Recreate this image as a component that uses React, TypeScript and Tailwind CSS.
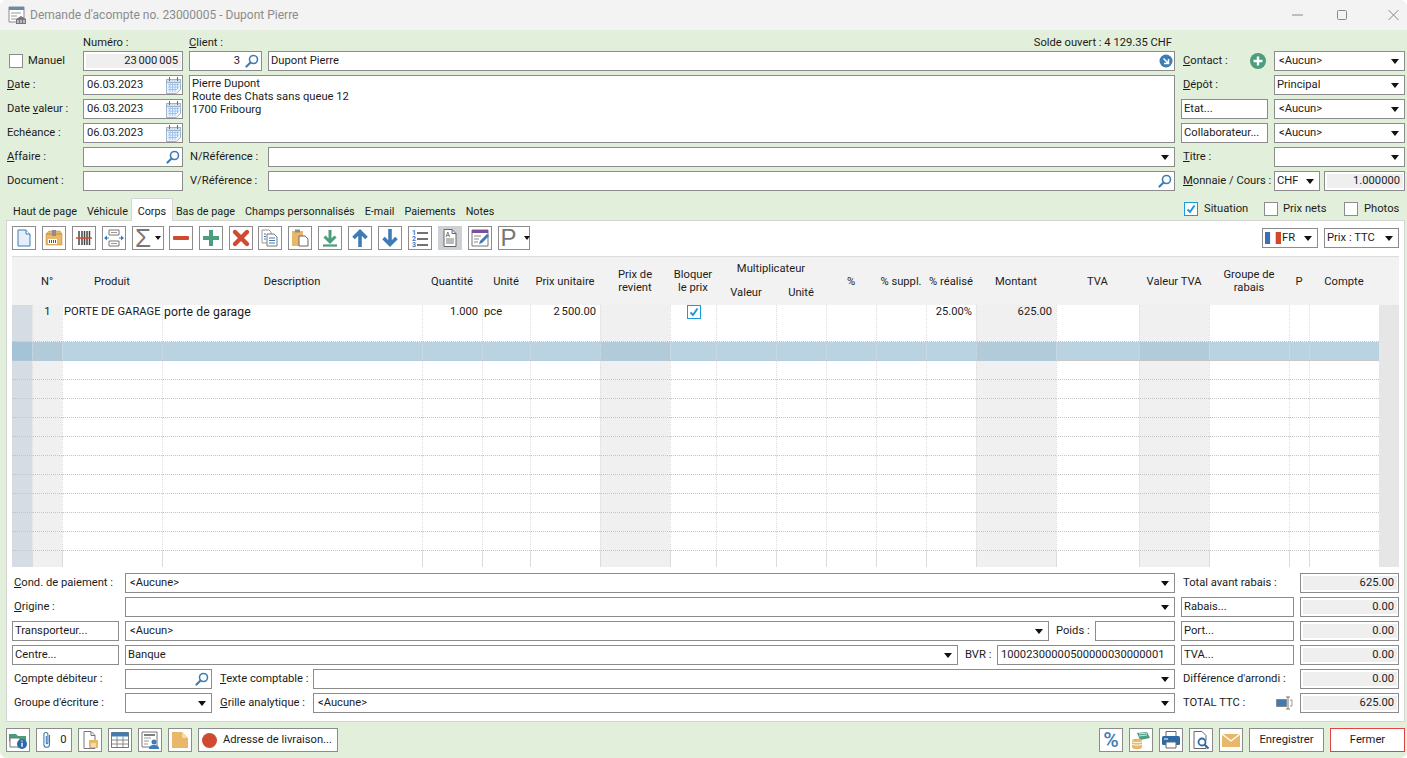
import React from "react";

const F = "[font-family:'Roboto',sans-serif]";

function Caret() {
  return (
    <svg width="8" height="5" viewBox="0 0 8 5" className="shrink-0">
      <path d="M0 0h8L4 5z" fill="#111" />
    </svg>
  );
}

function Search({ c = "#3f7cb5" }: { c?: string }) {
  return (
    <svg width="14" height="14" viewBox="0 0 14 14" className="shrink-0">
      <circle cx="8.5" cy="5.5" r="4" fill="none" stroke={c} strokeWidth="1.6" />
      <path d="M5.5 8.5L1.5 12.5" stroke={c} strokeWidth="2.2" strokeLinecap="round" />
    </svg>
  );
}

function Calendar() {
  return (
    <svg width="15" height="17" viewBox="0 0 15 17" className="shrink-0">
      <path d="M.5 2.5h14v10l-4 4h-10z" fill="#eef4fb" stroke="#9db3c8" />
      <path d="M.5 2.5h14v3H.5z" fill="#d5dfe9" stroke="#9db3c8" />
      <path d="M3.5 0v4M11.5 0v4" stroke="#5d6f80" />
      <path d="M2 7.5h11M2 10h11M2 12.500h9M4 6v9M6.500 6v9M9 6v9M11.500 6v6" stroke="#9cc0e6" strokeWidth=".9" />
    </svg>
  );
}

function Box({ className = "", children }: { className?: string; children?: React.ReactNode }) {
  return (
    <div className={`h-5 border border-[#8c8c8c] bg-white flex items-center min-w-0 ${className}`}>{children}</div>
  );
}

function Select({ v, className = "", pl = "pl-[4px]" }: { v?: string; className?: string; pl?: string }) {
  return (
    <Box className={`justify-between pr-[5px] ${pl} ${className}`}>
      <span className="truncate">{v}</span>
      <Caret />
    </Box>
  );
}

function ReadOnly({ v, className = "" }: { v: string; className?: string }) {
  return (
    <Box className={`pl-[2px] py-[2px] pr-[1px] ${className}`}>
      <div className="w-full h-full bg-[#efefef] flex items-center justify-end pr-[3px] [word-spacing:-1px]">{v}</div>
    </Box>
  );
}

function Btn({ t, className = "" }: { t: string; className?: string }) {
  return <Box className={`pl-[2px] ${className}`}>{t}</Box>;
}

function U({ a, b, c = "" }: { a?: string; b: string; c?: string }) {
  return (
    <>
      {a}
      <span className="underline">{b}</span>
      {c}
    </>
  );
}

function Check({ on = false }: { on?: boolean }) {
  return (
    <div className={`w-[14px] h-[14px] border ${on ? "border-[#1b9ae0]" : "border-[#8c8c8c]"} bg-white flex items-center justify-center shrink-0`}>
      {on && (
        <svg width="10" height="10" viewBox="0 0 10 10">
          <path d="M1.500 5.500L4 8l4.500-6.500" fill="none" stroke="#1b9ae0" strokeWidth="2" />
        </svg>
      )}
    </div>
  );
}

function DateInput() {
  return (
    <Box className="justify-between pl-[3px] pr-[1px]">
      <span>06.03.2023</span>
      <Calendar />
    </Box>
  );
}

function Header() {
  return (
    <div className="grid pl-[7px] pt-[2px] gap-y-[4px] grid-cols-[76px_100px_6px_79px_907px_6px_87px_6px_131px] grid-rows-[15px_20px_20px_20px_20px_20px_20px] items-center">
      <div />
      <div className="-mb-[6px]">Numéro :</div>
      <div />
      <div className="-mb-[6px]"><U b="C" c="lient :" /></div>
      <div className="text-right pr-[3px] -mb-[6px]">Solde ouvert : 4 129.35 CHF</div>
      <div />
      <div />
      <div />
      <div />

      <div className="flex items-center gap-[5px] pl-[2px] -mt-px">
        <Check />
        <span>Manuel</span>
      </div>
      <ReadOnly v="23 000 005" />
      <div />
      <Box className="w-[73px] justify-end pr-[2px] gap-[5px]">
        <span>3</span>
        <Search />
      </Box>
      <Box className="justify-between pl-[2px] pr-[1px]">
        <span>Dupont Pierre</span>
        <svg width="14" height="14" viewBox="0 0 14 14">
          <circle cx="7" cy="7" r="6.500" fill="#3f7cb5" />
          <path d="M4.500 4.500l4.500 4.500M9.500 5v4.500H5" fill="none" stroke="#fff" strokeWidth="1.500" />
        </svg>
      </Box>
      <div />
      <div className="flex items-center justify-between pl-[2px] pr-[2px]">
        <span><U b="C" c="ontact :" /></span>
        <svg width="16" height="16" viewBox="0 0 16 16">
          <circle cx="8" cy="8" r="8" fill="#4b9d7c" />
          <path d="M8 3.500v9M3.500 8h9" stroke="#fff" strokeWidth="2.400" />
        </svg>
      </div>
      <div className="col-start-9"><Select v="<Aucun>" /></div>

      <div className="-mt-px"><U b="D" c="ate :" /></div>
      <DateInput />
      <div />
      <Box className="col-span-2 row-span-3 !h-full !items-start pl-[2px] pt-[1px] flex-col leading-[13px]">
        <div>Pierre Dupont</div>
        <div>Route des Chats sans queue 12</div>
        <div>1700 Fribourg</div>
      </Box>
      <div />
      <div className="pl-[2px]"><U b="D" c="épôt :" /></div>
      <div className="col-start-9"><Select v="Principal" pl="pl-[2px]" /></div>

      <div className="-mt-px">Date <U b="v" c="aleur :" /></div>
      <DateInput />
      <div />
      <div className="col-start-7"><Btn t="Etat..." /></div>
      <div className="col-start-9"><Select v="<Aucun>" /></div>

      <div className="-mt-px">Echéance :</div>
      <DateInput />
      <div />
      <div className="col-start-7"><Btn t="Collaborateur..." /></div>
      <div className="col-start-9"><Select v="<Aucun>" /></div>

      <div className="-mt-px"><U b="A" c="ffaire :" /></div>
      <Box className="justify-end pr-[2px]"><Search /></Box>
      <div />
      <div className="pl-[1px]">N/Référence :</div>
      <Select />
      <div />
      <div className="pl-[2px]"><U b="T" c="itre :" /></div>
      <div className="col-start-9"><Select /></div>

      <div className="-mt-px">Document :</div>
      <Box />
      <div />
      <div className="pl-[1px]">V/Référence :</div>
      <Box className="justify-end pr-[2px]"><Search /></Box>
      <div />
      <div className="pl-[2px] whitespace-nowrap"><U b="M" c="onnaie / Cours :" /></div>
      <div className="col-start-9 flex gap-[4px]">
        <Select v="CHF" pl="pl-[2px]" className="w-[46px]" />
        <ReadOnly v="1.000000" className="flex-1" />
      </div>
    </div>
  );
}

function Tabs() {
  const left = ["Haut de page", "Véhicule"];
  const right = ["Bas de page", "Champs personnalisés", "E-mail", "Paiements", "Notes"];
  return (
    <div className="flex items-end justify-between h-[25px] mt-[5px] pl-[13px] relative z-10 -mb-px">
      <div className="flex items-end gap-[3px] text-[10.800px]">
        <div className="flex gap-[10px] h-[22px] pt-[4px] items-center">
          {left.map((t) => <span key={t}>{t}</span>)}
        </div>
        <div className="h-[23px] w-[42px] pt-[3px] bg-white border border-b-0 border-[#d5d5d5] flex items-center justify-center">Corps</div>
        <div className="flex gap-[10px] h-[22px] pt-[4px] items-center">
          {right.map((t) => <span key={t}>{t}</span>)}
        </div>
      </div>
      <div className="flex items-center h-[22px] mb-[1px] mr-[8px]">
        <Check on />
        <span className="ml-[6px] w-[60px]">Situation</span>
        <Check />
        <span className="ml-[5px] w-[61px]">Prix nets</span>
        <Check />
        <span className="ml-[6px] w-[35px]">Photos</span>
      </div>
    </div>
  );
}

function TB({ w = "w-[24px]", active = false, children }: { w?: string; active?: boolean; children?: React.ReactNode }) {
  return (
    <div className={`${w} h-[24px] shrink-0 flex items-center justify-center ${active ? "bg-[#cdd0d4]" : "bg-white border border-[#8c8c8c]"}`}>
      {children}
    </div>
  );
}

const S = ({ children }: { children: React.ReactNode }) => (
  <svg width="22" height="22" viewBox="0 0 22 22">{children}</svg>
);

function Toolbar() {
  return (
    <div className="flex items-center h-[24px]">
      <div className="flex items-center gap-[6px]">
        <TB><S><path d="M5 3h8l4 4v12H5z" fill="#e6eff9" stroke="#3f7cb5" /><path d="M13 3v4h4" fill="#fff" stroke="#3f7cb5" /></S></TB>
        <TB><S><path d="M3 7l3-3h11l2 3v11H3z" fill="#e9b768" stroke="#c8923f" strokeWidth=".6" /><path d="M3 7h16" stroke="#c8923f" /><path d="M9 3h4v6H9z" fill="#8d8d8d" /><path d="M5 12h9v5H5z" fill="#fff" /><path d="M6.500 13v3M8.500 13v3M10.500 13v3M12.500 13v3" stroke="#555" /></S></TB>
        <TB><S><path d="M6 4v14M9 4v14M11.500 4v14M14 4v14M16.500 4v14" stroke="#444" strokeWidth="1.500" /><path d="M3 11h16" stroke="#d0492f" strokeWidth="1.600" /></S></TB>
        <TB><S><path d="M6 3h10v5H6zM6 14h10v5H6z" fill="#fff" stroke="#777" /><path d="M8 5.500h6M8 16.500h6" stroke="#999" /><path d="M6 11H2M16 11h4" stroke="#3f7cb5" strokeWidth="1.200" /><path d="M1 11l3-2.500v5zM21 11l-3-2.500v5z" fill="#3f7cb5" /></S></TB>
        <TB w="w-[32px]">
          <div className="flex items-center gap-[4px]">
            <span className="text-[26px] leading-[22px] text-[#777] [font-family:'Liberation_Sans',sans-serif]">Σ</span>
            <svg width="6" height="4" viewBox="0 0 6 4"><path d="M0 0h6L3 4z" fill="#111" /></svg>
          </div>
        </TB>
        <div className="flex items-center gap-[6px] -ml-px">
          <TB><S><rect x="3" y="9" width="16" height="4" rx="1" fill="#cf4a30" /></S></TB>
          <TB><S><path d="M9 3h4v6h6v4h-6v6H9v-6H3V9h6z" fill="#4b9d7c" /></S></TB>
          <TB><S><path d="M5 5l12 12M17 5L5 17" stroke="#cf4a30" strokeWidth="4.400" strokeLinecap="round" /></S></TB>
          <div className="-ml-px"><TB><S><path d="M3 3h7l2 2v11H3z" fill="#fff" stroke="#999" /><path d="M8 7h7l3 3v9H8z" fill="#fff" stroke="#777" /><path d="M5 7h2M5 9.500h2M5 12h2M10 11h6M10 13.500h6M10 16h6" stroke="#3f7cb5" strokeWidth="1.200" /></S></TB></div>
        </div>
        <TB><S><path d="M3 4h11v15H3z" fill="#e9b768" /><path d="M6 2.500h5v3H6z" fill="#8d8d8d" /><path d="M10 9h6l3 3v7h-9z" fill="#fff" stroke="#666" /></S></TB>
        <TB><S><path d="M11 3v12M5.500 9.500L11 15l5.500-5.500" fill="none" stroke="#4b9d7c" strokeWidth="3" /><path d="M4 18.500h14" stroke="#4b9d7c" strokeWidth="2.200" /></S></TB>
        <TB><S><path d="M11 20V5M4.500 11L11 4.500 17.500 11" fill="none" stroke="#3f7cb5" strokeWidth="3.600" /></S></TB>
        <TB><S><path d="M11 2v15M4.500 11l6.500 6.500 6.500-6.500" fill="none" stroke="#3f7cb5" strokeWidth="3.600" /></S></TB>
        <TB><S><text x="3" y="8" fontSize="7" fill="#3f7cb5" fontWeight="700">1</text><text x="3" y="14" fontSize="7" fill="#3f7cb5" fontWeight="700">2</text><text x="3" y="20" fontSize="7" fill="#3f7cb5" fontWeight="700">3</text><path d="M8 6h11M8 12h11M8 18h11" stroke="#444" strokeWidth="1.300" /></S></TB>
        <TB active><S><path d="M5 2.500h8l4 4v13H5z" fill="#fff" stroke="#666" /><path d="M13 2.500v4h4" fill="none" stroke="#666" /><text x="6.500" y="10" fontSize="7" fill="#444">A</text><path d="M7 12h8M7 14h8M7 16h8" stroke="#777" /></S></TB>
        <TB><S><path d="M3 3h16v16H3z" fill="#fff" stroke="#777" /><path d="M3 3h16v3H3z" fill="#7b4f9d" /><path d="M5 9h7M5 12h5M5 15h4" stroke="#888" /><path d="M10 17l1-3 7-7 2 2-7 7z" fill="#3f7cb5" /></S></TB>
        <TB w="w-[32px]">
          <div className="flex items-center gap-[7px] pl-[2px]">
            <span className="text-[24px] leading-[22px] text-[#777] [font-family:'Liberation_Sans',sans-serif]">P</span>
            <svg width="6" height="4" viewBox="0 0 6 4"><path d="M0 0h6L3 4z" fill="#111" /></svg>
          </div>
        </TB>
      </div>
      <div className="ml-auto flex gap-[6px]">
        <Box className="w-[56px] justify-between pr-[5px] pl-[2px]">
          <span className="flex items-center gap-[1px]">
            <svg width="16" height="12" viewBox="0 0 16 12"><path d="M0 0h5.300v12H0z" fill="#3f6fb0" /><path d="M5.300 0h5.400v12H5.300z" fill="#fff" /><path d="M10.700 0H16v12h-5.300z" fill="#d0492f" /></svg>
            FR
          </span>
          <Caret />
        </Box>
        <Select v="Prix : TTC" pl="pl-[2px]" className="w-[75px]" />
      </div>
    </div>
  );
}

const GRID = "grid grid-cols-[20px_30px_100px_260px_60px_48px_70px_70px_46px_60px_50px_50px_50px_50px_80px_83px_70px_80px_20px_70px_20px]";
const GRAY = [1, 7, 14, 16];

function cellBg(i: number, sel: boolean) {
  if (i === 0) return sel ? "bg-[#a4c3d6]" : "bg-[#d6dce4]";
  if (i === 20) return "bg-[#e6e6e6]";
  if (GRAY.includes(i)) return sel ? "bg-[#b1cbda]" : "bg-[#f0f0f0]";
  return sel ? "bg-[#b9d3e2]" : "bg-white";
}

function Row({ h, sel = false, last = false, cells = {} }: { h: string; sel?: boolean; last?: boolean; cells?: Record<number, React.ReactNode> }) {
  return (
    <div className={`${GRID} ${h}`}>
      {Array.from({ length: 21 }, (_, i) => (
        <div
          key={i}
          className={`${cellBg(i, sel)} ${i > 0 && i < 20 ? (sel ? "border-l border-[#d2e0e9]" : "border-l border-[#dcdcdc]") : ""} ${last || i === 20 ? "" : "border-b border-dotted !border-b-[#c4c4c4]"} overflow-hidden leading-[14px]`}
        >
          {cells[i]}
        </div>
      ))}
    </div>
  );
}

function HeadCell({ children, className = "" }: { children?: React.ReactNode; className?: string }) {
  return <div className={`flex items-center justify-center text-center leading-[13px] whitespace-nowrap ${className}`}>{children}</div>;
}

function Table() {
  const R = ({ t }: { t: string }) => <div className="text-right pr-[4px] whitespace-nowrap [word-spacing:-1px]">{t}</div>;
  return (
    <div className="h-[311px] border-t border-[#dcdcdc] flex flex-col">
      <div className={`${GRID} h-[48px] bg-[#f2f2f2]`}>
        <HeadCell />
        <HeadCell>N°</HeadCell>
        <HeadCell>Produit</HeadCell>
        <HeadCell>Description</HeadCell>
        <HeadCell>Quantité</HeadCell>
        <HeadCell>Unité</HeadCell>
        <HeadCell>Prix unitaire</HeadCell>
        <HeadCell>Prix de<br />revient</HeadCell>
        <HeadCell>Bloquer<br />le prix</HeadCell>
        <div className="col-span-2 flex flex-col items-center leading-[14px]">
          <div className="mt-[5px]">Multiplicateur</div>
          <div className="flex w-full mt-[10px]">
            <div className="w-[60px] text-center">Valeur</div>
            <div className="w-[50px] text-center">Unité</div>
          </div>
        </div>
        <HeadCell>%</HeadCell>
        <HeadCell>% suppl.</HeadCell>
        <HeadCell>% réalisé</HeadCell>
        <HeadCell>Montant</HeadCell>
        <HeadCell>TVA</HeadCell>
        <HeadCell>Valeur TVA</HeadCell>
        <HeadCell>Groupe de<br />rabais</HeadCell>
        <HeadCell>P</HeadCell>
        <HeadCell>Compte</HeadCell>
        <div />
      </div>
      <Row
        h="h-[37px]"
        cells={{
          1: <div className="text-center">1</div>,
          2: <div className="pl-px whitespace-nowrap">PORTE DE GARAGE</div>,
          3: <div className="pl-[1px] text-[12.200px] tracking-[0.1px]">porte de garage</div>,
          4: <R t="1.000" />,
          5: <div className="pl-px">pce</div>,
          6: <R t="2 500.00" />,
          8: <div className="flex justify-center"><Check on /></div>,
          13: <R t="25.00%" />,
          14: <R t="625.00" />,
        }}
      />
      <Row h="h-[19px]" sel />
      {Array.from({ length: 10 }, (_, i) => <Row key={i} h="h-[19px]" />)}
      <Row h="h-[16px]" last />
    </div>
  );
}

function BottomForm() {
  return (
    <div className="grid grid-cols-[107px_6px_1050px_6px_113px_6px_99px] gap-y-[4px] auto-rows-[20px] items-center">
      <div className="pl-[2px] whitespace-nowrap"><U b="C" c="ond. de paiement :" /></div>
      <div />
      <Select v="<Aucune>" />
      <div />
      <div className="pl-[2px]">Total avant rabais :</div>
      <div />
      <ReadOnly v="625.00" />

      <div className="pl-[2px]"><U b="O" c="rigine :" /></div>
      <div />
      <Select />
      <div />
      <Btn t="Rabais..." />
      <div />
      <ReadOnly v="0.00" />

      <Btn t="Transporteur..." />
      <div />
      <div className="flex items-center">
        <Select v="<Aucun>" className="w-[924px]" />
        <span className="ml-[7px] w-[39px] shrink-0">Poids :</span>
        <Box className="flex-1" />
      </div>
      <div />
      <Btn t="Port..." />
      <div />
      <ReadOnly v="0.00" />

      <Btn t="Centre..." />
      <div />
      <div className="flex items-center">
        <Select v="Banque" className="w-[833px]" pl="pl-[2px]" />
        <span className="ml-[7px] w-[32px] shrink-0">BVR :</span>
        <Box className="flex-1 pl-[3px]">10002300000500000030000001</Box>
      </div>
      <div />
      <Btn t="TVA..." />
      <div />
      <ReadOnly v="0.00" />

      <div className="pl-[2px] whitespace-nowrap">C<span className="underline">o</span>mpte débiteur :</div>
      <div />
      <div className="flex items-center">
        <Box className="w-[87px] justify-end pr-[2px]"><Search /></Box>
        <span className="ml-[8px] w-[93px] shrink-0 whitespace-nowrap"><U b="T" c="exte comptable :" /></span>
        <Select className="flex-1" />
      </div>
      <div />
      <div className="pl-[2px] whitespace-nowrap">Différence d'arrondi :</div>
      <div />
      <ReadOnly v="0.00" />

      <div className="pl-[2px] whitespace-nowrap">Groupe d'écriture :</div>
      <div />
      <div className="flex items-center">
        <Select className="w-[87px]" />
        <span className="ml-[8px] w-[93px] shrink-0 whitespace-nowrap"><U b="G" c="rille analytique :" /></span>
        <Select v="<Aucune>" className="flex-1" />
      </div>
      <div />
      <div className="pl-[2px] flex items-center justify-between pr-[1px]">
        <span>TOTAL TTC :</span>
        <svg width="17" height="14" viewBox="0 0 17 14"><path d="M.5 3.500h10v7H.5z" fill="#3f7cb5" stroke="#888" /><path d="M10 1h4M12 1v12M10 13h4" stroke="#777" fill="none" /><path d="M14 4h2v6h-2" stroke="#999" fill="none" /></svg>
      </div>
      <div />
      <ReadOnly v="625.00" />
    </div>
  );
}

function BottomBar() {
  return (
    <div className="flex items-center h-[24px] mt-[6px] pl-[6px] pr-[2px]">
      <div className="flex gap-[6px] items-center">
        <TB><S><path d="M2 5h7l2 2h8v5H2z" fill="#4b9d7c" /><path d="M3 9v9h10V9z" fill="#fff" stroke="#777" /><circle cx="15" cy="15" r="5" fill="#2f6aa8" /><path d="M15 13.800v4M15 11.500v1" stroke="#fff" strokeWidth="1.400" /></S></TB>
        <TB w="w-[36px]">
          <div className="flex items-center gap-[7px]">
            <svg width="12" height="18" viewBox="0 0 12 18"><path d="M8.500 4v9.500a2.800 2.800 0 01-5.600 0V3.500a2 2 0 014 0V12a.8.8 0 01-1.600 0V5" fill="none" stroke="#3f7cb5" strokeWidth="1.100" /></svg>
            <span>0</span>
          </div>
        </TB>
        <TB><S><path d="M5 2.500h7l4 4v13H5z" fill="#fff" stroke="#777" /><path d="M12 2.500v4h4" fill="none" stroke="#777" /><path d="M10 11h9v8h-9z" fill="#e9b768" /><path d="M12 15h5M12 17h5" stroke="#fff" /></S></TB>
        <TB><S><path d="M2.500 3.500h17v15h-17z" fill="#fff" stroke="#777" /><path d="M2.500 3.500h17v4h-17z" fill="#3f7cb5" /><path d="M2.500 11h17M2.500 15h17M8 7.500v11M14 7.500v11" stroke="#888" /></S></TB>
        <TB><S><path d="M3 3h15v15H3z" fill="#fff" stroke="#777" /><path d="M5 6h11" stroke="#555" strokeWidth="1.500" /><path d="M5 9h7M5 12h5M5 15h4" stroke="#999" /><circle cx="15" cy="13" r="2.500" fill="#3f7cb5" /><path d="M10 20c0-3 2-4 5-4s5 1 5 4z" fill="#3f7cb5" /></S></TB>
        <TB><S><path d="M3 3h10l6 6v10H3z" fill="#e9b768" /><path d="M13 3v6h6z" fill="#f4d9ae" /></S></TB>
        <TB w="w-[140px]">
          <div className="flex items-center gap-[6px] w-full pl-[3px]">
            <span className="w-[15px] h-[15px] rounded-full bg-[#cf4a30] shrink-0" />
            <span className="whitespace-nowrap">Adresse de livraison...</span>
          </div>
        </TB>
      </div>
      <div className="ml-auto flex gap-[6px] items-center">
        <TB><span className="text-[21px] leading-[22px] text-[#3f7cb5] font-medium">%</span></TB>
        <TB><S><path d="M7 4l10-1 3 6-10 2z" fill="#4b9d7c" /><path d="M9 5l8-1M9 7l8-1" stroke="#cfe6db" /><ellipse cx="7" cy="12" rx="5" ry="2.200" fill="#e9b768" /><path d="M2 12v6c0 1.500 2.500 2.200 5 2.200s5-.7 5-2.200v-6" fill="#e9b768" /><path d="M2 15c1 1.500 9 1.500 10 0M2 12.500c1 1.500 9 1.500 10 0" stroke="#fff" fill="none" /></S></TB>
        <TB><S><path d="M6 2.500h10v5H6z" fill="#fff" stroke="#666" /><rect x="2" y="7" width="18" height="9" rx="1.500" fill="#2f6aa8" /><path d="M6 13h10v6H6z" fill="#fff" stroke="#666" /><path d="M4 10h4" stroke="#fff" /></S></TB>
        <TB><S><path d="M4 2.500h8l4 4v5M16 17v2.500H4v-17" fill="#fff" stroke="#666" /><circle cx="12" cy="13" r="3.500" fill="none" stroke="#2f6aa8" strokeWidth="1.800" /><path d="M14.500 15.500l4 4" stroke="#2f6aa8" strokeWidth="2.200" /></S></TB>
        <TB><S><path d="M2 5h18v13H2z" fill="#e9b768" /><path d="M2 5l9 7 9-7" fill="none" stroke="#fff" strokeWidth="1.300" /></S></TB>
        <TB w="w-[75px]">Enregistrer</TB>
        <div className="w-[75px] h-[24px] bg-white border border-[#e04545] flex items-center justify-center">Fermer</div>
      </div>
    </div>
  );
}

export default function App() {
  return (
    <div className="w-[1407px] h-[758px] overflow-hidden bg-white">
      <div className={`w-full h-full rounded-[7px] overflow-hidden flex flex-col bg-[#e2efda] text-[11.200px] leading-[16px] text-[#1c1c1c] ${F}`}>
        <div className="h-[30px] shrink-0 bg-[#f3f3f3] flex items-center pl-[8px] text-[#8b8b8b] text-[12px]">
          <svg width="19" height="19" viewBox="0 0 19 19" className="shrink-0">
            <path d="M1 1h15v15H1z" fill="#fff" stroke="#8a8a8a" />
            <path d="M1 1h15v3H1z" fill="#5d8db8" />
            <path d="M3 7h10M3 10h6M3 13h5" stroke="#999" />
            <path d="M8 13l5-3 5 3v5H8z" fill="#777" />
            <path d="M10 14v3M13 14v3M16 14v3" stroke="#fff" />
          </svg>
          <span className="ml-[3px]">Demande d'acompte no. 23000005 - Dupont Pierre</span>
          <div className="ml-auto flex items-center pr-[8px]">
            <svg width="45" height="12" viewBox="0 0 45 12"><path d="M0 6h11" stroke="#888" /></svg>
            <svg width="51" height="12" viewBox="0 0 51 12"><rect x=".5" y="1.500" width="9" height="9" rx="1" fill="none" stroke="#888" /></svg>
            <svg width="11" height="12" viewBox="0 0 11 12"><path d="M.5 1l10 10M10.500 1l-10 10" stroke="#888" /></svg>
          </div>
        </div>
        <Header />
        <Tabs />
        <div className="ml-[6px] mr-[2px] h-[502px] shrink-0 border border-[#d5d5d5] bg-white flex flex-col gap-[6px] px-[5px] pt-[5px]">
          <Toolbar />
          <Table />
          <BottomForm />
        </div>
        <BottomBar />
      </div>
    </div>
  );
}
